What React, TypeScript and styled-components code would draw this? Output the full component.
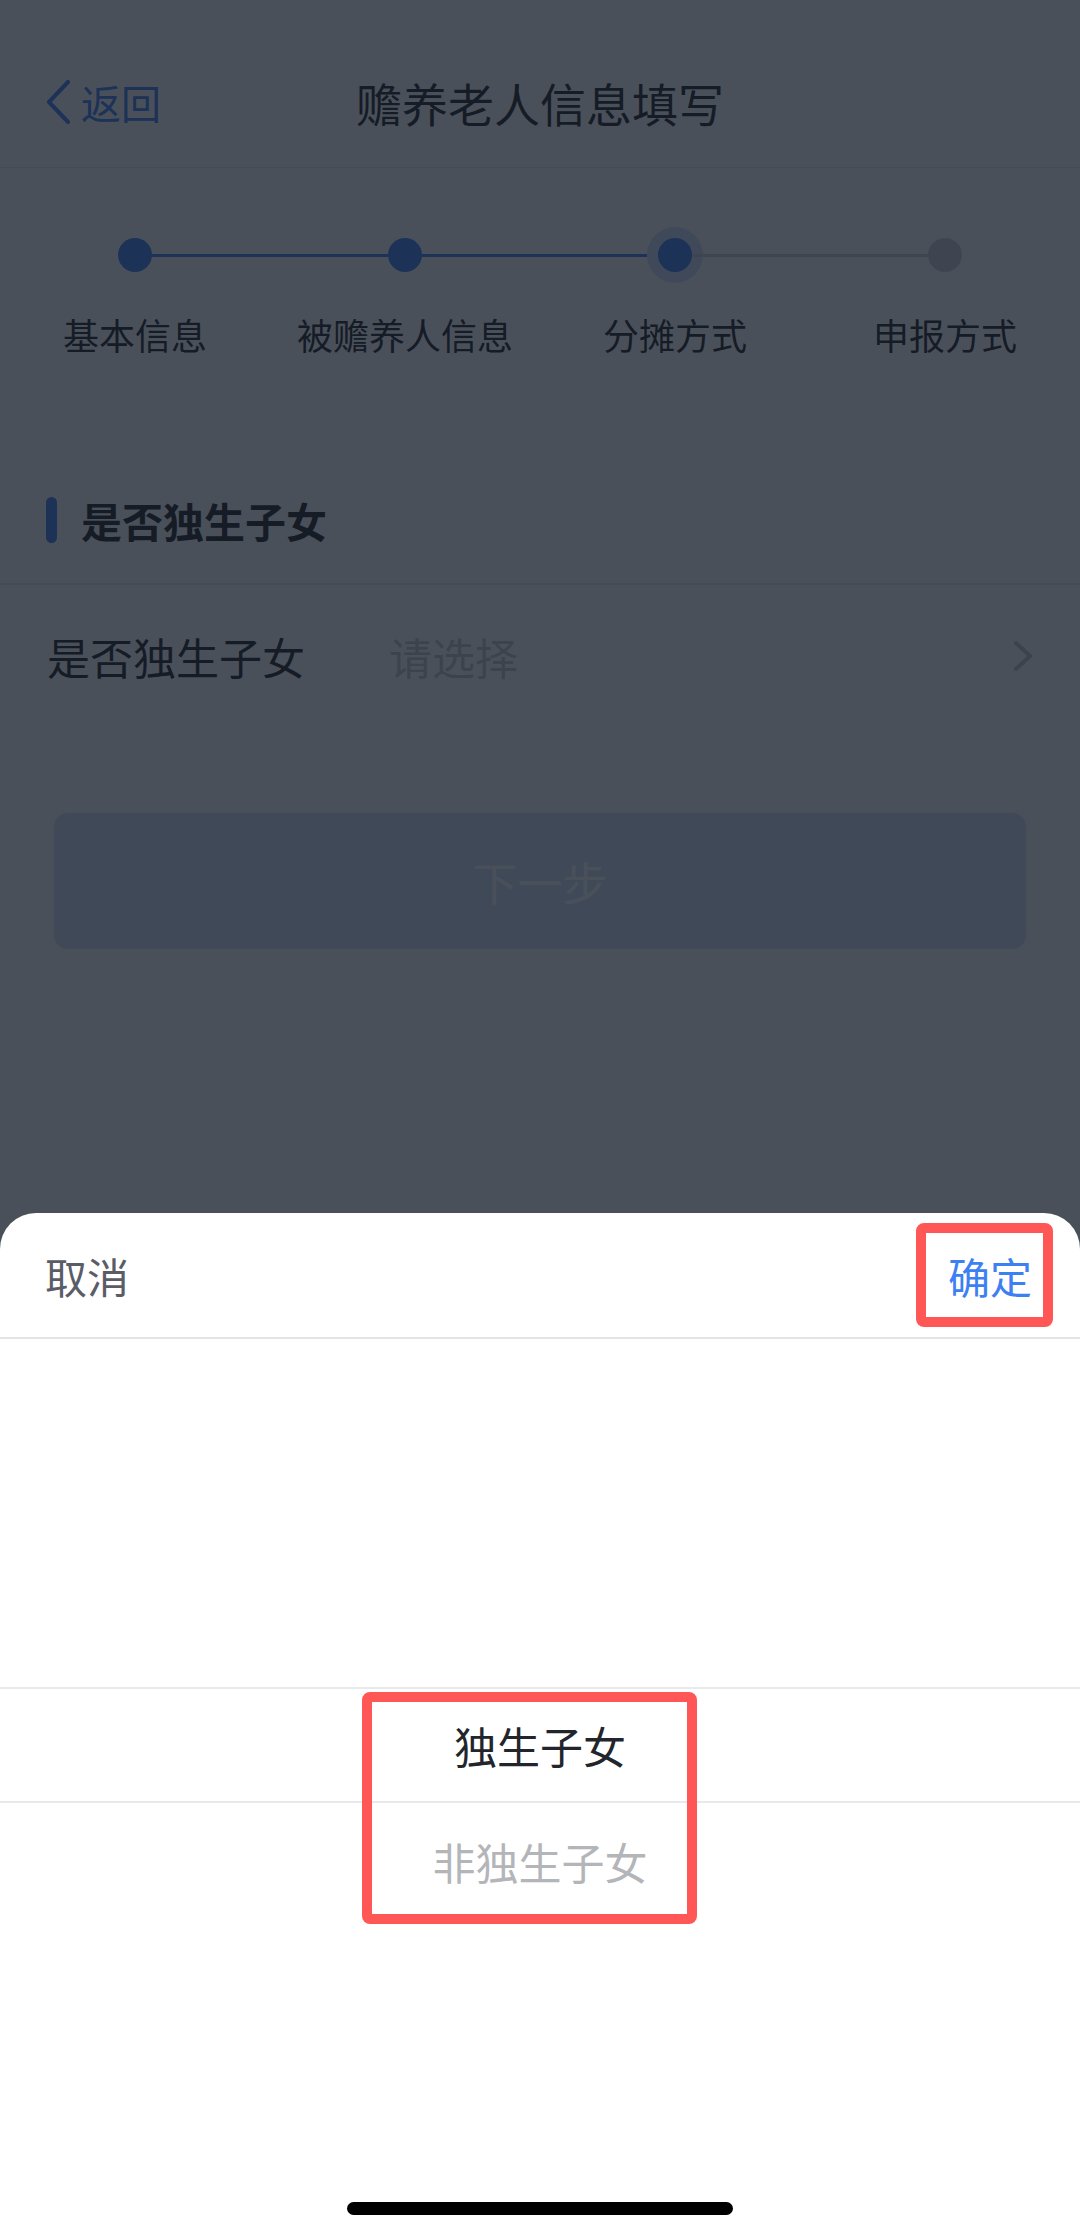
import { FC, Fragment } from "react"
import styled, { createGlobalStyle } from "styled-components"

const GlobalStyle = createGlobalStyle`
  html, body {
    margin: 0;
    padding: 0;
  }
  body {
    font-family: "Noto Sans CJK SC", "Noto Sans", sans-serif;
    background: #fff;
  }
  * {
    box-sizing: border-box;
  }
`

const BLUE = "#4a86f0"
const MARK = "#ff5656"

const Screen = styled.div`
  position: relative;
  width: 1080px;
  height: 2234px;
  overflow: hidden;
  background: #fff;
  color: #333;
`

const NavBar = styled.div`
  display: grid;
  grid-template-columns: 1fr auto 1fr;
  align-items: center;
  height: 168px;
  padding: 36px 45px 0;
  border-bottom: 1px solid #e8eaed;
`

const BackLink = styled.div`
  display: flex;
  align-items: center;
  gap: 10px;
  color: ${BLUE};
  font-size: 40px;
  line-height: 1;
`

const NavTitle = styled.div`
  font-size: 46px;
  color: #333;
`

const StepsBlock = styled.div`
  padding: 70px 0 76px;
`

const StepTrack = styled.div`
  display: flex;
  align-items: center;
  padding: 0 118px;
  height: 34px;
`

const StepDot = styled.div<{ $state: "done" | "current" | "todo" }>`
  flex: none;
  width: 34px;
  height: 34px;
  border-radius: 50%;
  background: ${({ $state }) => ($state === "todo" ? "#d2d4d8" : BLUE)};
  box-shadow: ${({ $state }) =>
    $state === "current" ? "0 0 0 11px #d6e4fc" : "none"};
`

const StepLine = styled.div<{ $active: boolean }>`
  flex: 1;
  height: 3px;
  background: ${({ $active }) => ($active ? BLUE : "#d2d4d8")};
`

const StepLabels = styled.div`
  display: grid;
  grid-template-columns: repeat(4, 1fr);
  margin-top: 36px;
  text-align: center;
  font-size: 36px;
  line-height: 52px;
  color: #333;
`

const SectionHeader = styled.div`
  display: flex;
  align-items: center;
  gap: 24px;
  padding: 61px 0 40px 46px;
`

const SectionBar = styled.div`
  width: 11px;
  height: 46px;
  border-radius: 6px;
  background: ${BLUE};
`

const SectionTitle = styled.div`
  font-size: 41px;
  font-weight: 700;
  line-height: 46px;
  color: #333;
`

const FieldRow = styled.div`
  display: flex;
  align-items: center;
  height: 144px;
  padding: 0 48px 0 47px;
  border-top: 2px solid #e8eaed;
  font-size: 43px;
`

const FieldLabel = styled.div`
  width: 342px;
  color: #333;
`

const FieldValue = styled.div`
  flex: 1;
  color: #c8c9cc;
`

const NextButton = styled.div`
  display: flex;
  align-items: center;
  justify-content: center;
  height: 136px;
  margin: 86px 54px 0;
  border-radius: 14px;
  background: #d5e3f5;
  color: #fff;
  font-size: 45px;
`

const Mask = styled.div`
  position: absolute;
  inset: 0;
  background: rgba(14, 22, 35, 0.75);
`

const Sheet = styled.div`
  position: absolute;
  left: 0;
  right: 0;
  bottom: 0;
  height: 1021px;
  display: flex;
  flex-direction: column;
  background: #fff;
  border-radius: 36px 36px 0 0;
`

const SheetHeader = styled.div`
  display: flex;
  align-items: center;
  justify-content: space-between;
  height: 126px;
  padding: 0 27px 0 45px;
  border-bottom: 2px solid #e3e3e8;
  font-size: 42px;
`

const CancelText = styled.div`
  color: #5a5d66;
`

const ConfirmMark = styled.div`
  display: flex;
  align-items: center;
  justify-content: flex-end;
  width: 137px;
  height: 104px;
  padding-right: 11px;
  border: 10px solid ${MARK};
  border-radius: 8px;
  color: #3d80f2;
`

const Picker = styled.div`
  position: relative;
  height: 812px;
  padding-top: 348px;
  overflow: hidden;
`

const PickerItem = styled.div<{ $selected?: boolean }>`
  display: flex;
  align-items: center;
  justify-content: center;
  height: 116px;
  font-size: 43px;
  color: ${({ $selected }) => ($selected ? "#22252b" : "#b4b5b9")};
  border-top: ${({ $selected }) => ($selected ? "2px solid #e8e8ed" : "none")};
  border-bottom: ${({ $selected }) =>
    $selected ? "2px solid #e8e8ed" : "none"};
`

const PickerMark = styled.div`
  position: absolute;
  left: 362px;
  top: 353px;
  width: 335px;
  height: 232px;
  border: 10px solid ${MARK};
  border-radius: 8px;
`

const HomeArea = styled.div`
  flex: 1;
  display: flex;
  justify-content: center;
  padding-top: 51px;
`

const HomeIndicator = styled.div`
  width: 386px;
  height: 13px;
  border-radius: 7px;
  background: #000;
`

const steps = ["基本信息", "被赡养人信息", "分摊方式", "申报方式"]
const current = 2

const BackChevron: FC = () => (
  <svg width="26" height="44" viewBox="0 0 26 44" fill="none">
    <path
      d="M23 2 L4 22 L23 42"
      stroke={BLUE}
      strokeWidth="4"
      strokeLinecap="round"
      strokeLinejoin="round"
    />
  </svg>
)

const RightChevron: FC = () => (
  <svg width="18" height="30" viewBox="0 0 18 30" fill="none">
    <path
      d="M2 2 L16 15 L2 28"
      stroke="#c8c9cc"
      strokeWidth="4"
      strokeLinecap="round"
      strokeLinejoin="round"
    />
  </svg>
)

const App: FC = () => {
  return (
    <Screen>
      <GlobalStyle />
      <NavBar>
        <BackLink>
          <BackChevron />
          返回
        </BackLink>
        <NavTitle>赡养老人信息填写</NavTitle>
        <div />
      </NavBar>

      <StepsBlock>
        <StepTrack>
          {steps.map((s, i) => (
            <Fragment key={s}>
              {i > 0 && <StepLine $active={i <= current} />}
              <StepDot
                $state={i < current ? "done" : i === current ? "current" : "todo"}
              />
            </Fragment>
          ))}
        </StepTrack>
        <StepLabels>
          {steps.map((s) => (
            <div key={s}>{s}</div>
          ))}
        </StepLabels>
      </StepsBlock>

      <SectionHeader>
        <SectionBar />
        <SectionTitle>是否独生子女</SectionTitle>
      </SectionHeader>

      <FieldRow>
        <FieldLabel>是否独生子女</FieldLabel>
        <FieldValue>请选择</FieldValue>
        <RightChevron />
      </FieldRow>

      <NextButton>下一步</NextButton>

      <Mask />

      <Sheet>
        <SheetHeader>
          <CancelText>取消</CancelText>
          <ConfirmMark>确定</ConfirmMark>
        </SheetHeader>
        <Picker>
          <PickerItem $selected>独生子女</PickerItem>
          <PickerItem>非独生子女</PickerItem>
          <PickerMark />
        </Picker>
        <HomeArea>
          <HomeIndicator />
        </HomeArea>
      </Sheet>
    </Screen>
  )
}

export default App
